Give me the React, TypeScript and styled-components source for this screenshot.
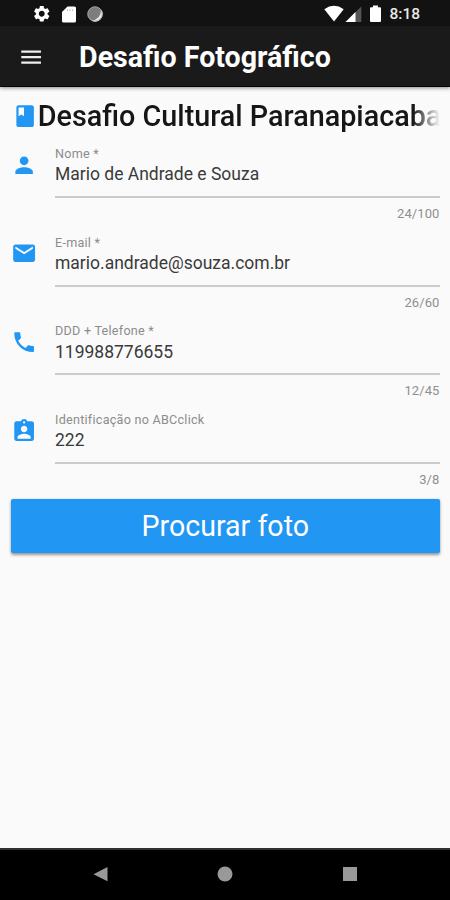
import React from "react";
import styled, { createGlobalStyle } from "styled-components";

const GlobalStyle = createGlobalStyle`
  *, *::before, *::after { box-sizing: border-box; }
  body {
    margin: 0;
    background: #fafafa;
    font-family: Roboto, "Liberation Sans", sans-serif;
  }
`;

const Screen = styled.div`
  display: flex;
  flex-direction: column;
  width: 450px;
  height: 900px;
  overflow: hidden;
  background: #fafafa;
`;

const StatusBar = styled.div`
  display: flex;
  flex: none;
  align-items: center;
  justify-content: space-between;
  height: 26px;
  padding: 2px 30px 0 32px;
  background: #121212;
`;

const StatusGroup = styled.div<{ $gap: number }>`
  display: flex;
  align-items: center;
  gap: ${(p) => p.$gap}px;
`;

const Clock = styled.span`
  color: #e8e8e8;
  font-size: 15.5px;
  font-weight: 500;
  line-height: 18px;
`;

const AppBar = styled.header`
  display: flex;
  flex: none;
  align-items: center;
  height: 61px;
  padding-left: 17.8px;
  background: #1a1a1a;
  border-bottom: 1px solid #060606;
  box-shadow: 0 1px 4px rgba(0, 0, 0, 0.45);
`;

const MenuButton = styled.button`
  display: flex;
  padding: 2px 0 0;
  border: 0;
  background: none;
`;

const AppTitle = styled.h1`
  margin: 1px 0 0 35px;
  color: #fff;
  font-size: 28.6px;
  font-weight: 700;
  line-height: 34px;
  white-space: nowrap;
`;

const Content = styled.main`
  display: flex;
  flex: 1;
  flex-direction: column;
  padding: 11px 10.5px 0 11px;
`;

const Heading = styled.div`
  display: flex;
  align-items: center;
  height: 36px;
  padding-left: 0.6px;
`;

const HeadingText = styled.h2`
  flex: 1;
  min-width: 0;
  margin: 0;
  overflow: hidden;
  color: #161616;
  font-size: 28.75px;
  font-weight: 500;
  line-height: 36px;
  white-space: nowrap;
  mask-image: linear-gradient(to right, #000 calc(100% - 27px), transparent);
`;

const Form = styled.form`
  display: flex;
  flex-direction: column;
  padding-top: 5px;
`;

const Field = styled.div`
  display: flex;
  height: 88.6px;
`;

const FieldIcon = styled.div`
  flex: none;
  width: 44px;
  padding: 12.9px 0 0 0.4px;
`;

const FieldBody = styled.label`
  display: flex;
  flex: 1;
  flex-direction: column;
  min-width: 0;
  padding-top: 7px;
`;

const FieldLabel = styled.span<{ $tracking: number }>`
  color: #8c8c8c;
  font-size: 12.6px;
  line-height: 16px;
  letter-spacing: ${(p) => p.$tracking}px;
`;

const FieldValue = styled.span`
  height: 36px;
  padding-top: 1.4px;
  border-bottom: 2px solid #cbcbcb;
  color: #3a3a3a;
  font-size: 17.5px;
  line-height: 23px;
`;

const Counter = styled.span`
  align-self: flex-end;
  margin-top: 8px;
  color: #8f8f8f;
  font-size: 13px;
  line-height: 16px;
  letter-spacing: 0.1px;
`;

const PhotoButton = styled.button`
  height: 54px;
  margin-top: 5.2px;
  padding: 0;
  border: 0;
  border-radius: 2px;
  background: #2196f3;
  box-shadow: 0 1.5px 3px rgba(0, 0, 0, 0.4);
  color: #fff;
  font-family: inherit;
  font-size: 28.6px;
  line-height: 34px;
`;

const NavBar = styled.nav`
  display: flex;
  flex: none;
  align-items: center;
  justify-content: space-between;
  height: 52px;
  padding: 0 92px 2px;
  border-top: 2px solid #303030;
  background: #000;
`;

const Icon = ({ d, size = 26.25, color = "#2196f3" }: { d: string; size?: number; color?: string }) => (
  <svg width={size} height={size} viewBox="0 0 24 24" fill={color} display="block">
    <path d={d} />
  </svg>
);

const icons = {
  book: "M18 2H6c-1.1 0-2 .9-2 2v16c0 1.1.9 2 2 2h12c1.1 0 2-.9 2-2V4c0-1.1-.9-2-2-2zM6 4h5v8l-2.5-1.5L6 12V4z",
  person: "M12 12c2.21 0 4-1.79 4-4s-1.79-4-4-4-4 1.79-4 4 1.79 4 4 4zm0 2c-2.67 0-8 1.34-8 4v2h16v-2c0-2.66-5.33-4-8-4z",
  email: "M20 4H4c-1.1 0-1.99.9-1.99 2L2 18c0 1.1.9 2 2 2h16c1.1 0 2-.9 2-2V6c0-1.1-.9-2-2-2zm0 4l-8 5-8-5V6l8 5 8-5v2z",
  phone: "M6.62 10.79c1.44 2.83 3.76 5.14 6.59 6.59l2.2-2.2c.27-.27.67-.36 1.02-.24 1.12.37 2.33.57 3.57.57.55 0 1 .45 1 1V20c0 .55-.45 1-1 1-9.39 0-17-7.61-17-17 0-.55.45-1 1-1h3.5c.55 0 1 .45 1 1 0 1.25.2 2.45.57 3.57.11.35.03.74-.25 1.02l-2.2 2.2z",
  badge: "M19 3h-4.18C14.4 1.84 13.3 1 12 1s-2.4.84-2.82 2H5c-1.1 0-2 .9-2 2v14c0 1.1.9 2 2 2h14c1.1 0 2-.9 2-2V5c0-1.1-.9-2-2-2zm-7 0c.55 0 1 .45 1 1s-.45 1-1 1-1-.45-1-1 .45-1 1-1zm0 4c1.66 0 3 1.34 3 3s-1.34 3-3 3-3-1.34-3-3 1.34-3 3-3zm6 12H6v-1.4c0-2 4-3.1 6-3.1s6 1.1 6 3.1V19z",
  menu: "M3 18h18v-2H3v2zm0-5h18v-2H3v2zm0-7v2h18V6H3z",
  gear: "M19.14 12.94c.04-.3.06-.61.06-.94 0-.32-.02-.64-.07-.94l2.03-1.58c.18-.14.23-.41.12-.61l-1.92-3.32c-.12-.22-.37-.29-.59-.22l-2.39.96c-.5-.38-1.03-.7-1.62-.94L14.4 2.81c-.04-.24-.24-.41-.48-.41h-3.84c-.24 0-.43.17-.47.41L9.25 5.35c-.59.24-1.13.57-1.62.94L5.24 5.33c-.22-.08-.47 0-.59.22L2.74 8.87c-.12.21-.08.47.12.61l2.03 1.58c-.05.3-.09.63-.09.94s.02.64.07.94l-2.03 1.58c-.18.14-.23.41-.12.61l1.92 3.32c.12.22.37.29.59.22l2.39-.96c.5.38 1.03.7 1.62.94l.36 2.54c.05.24.24.41.48.41h3.84c.24 0 .44-.17.47-.41l.36-2.54c.59-.24 1.13-.56 1.62-.94l2.39.96c.22.08.47 0 .59-.22l1.92-3.32c.12-.22.07-.47-.12-.61l-2.01-1.58zM12 15.6c-1.98 0-3.6-1.62-3.6-3.6s1.62-3.6 3.6-3.6 3.6 1.62 3.6 3.6-1.62 3.6-3.6 3.6z",
};

const fields = [
  { icon: icons.person, label: "Nome *", value: "Mario de Andrade e Souza", count: "24/100", tracking: 0.25 },
  { icon: icons.email, label: "E-mail *", value: "mario.andrade@souza.com.br", count: "26/60", tracking: 0.25 },
  { icon: icons.phone, label: "DDD + Telefone *", value: "119988776655", count: "12/45", tracking: 0.25 },
  { icon: icons.badge, label: "Identificação no ABCclick", value: "222", count: "3/8", tracking: 0.25 },
];

export default function App() {
  return (
    <>
      <GlobalStyle />
      <Screen>
        <StatusBar>
          <StatusGroup $gap={10}>
            <Icon d={icons.gear} size={19.5} color="#fff" />
            <svg width="14" height="17" viewBox="0 0 14 17">
              <path d="M5.5 0.5H12.5Q14 .5 14 2V15Q14 16.5 12.5 16.5H1.5Q0 16.5 0 15V6Z" fill="#fff" />
              <path d="M5.5 3.4v1.6M8 3.4v1.6M10.5 3.4v1.6" stroke="#bbb" strokeWidth="1" />
            </svg>
            <svg width="18" height="18" viewBox="0 0 18 18">
              <circle cx="9" cy="9" r="7.6" fill="#7d7d7d" />
              <path d="M14.9 4.2A7.6 7.6 0 0 1 5.2 15.6Q15.5 14.5 14.9 4.2Z" fill="#e6e6e6" />
              <circle cx="9" cy="9" r="7.2" fill="none" stroke="#aaa" strokeWidth=".8" />
            </svg>
          </StatusGroup>
          <StatusGroup $gap={8}>
            <svg width="38" height="18" viewBox="0 0 38 18">
              <path d="M.3 4.3Q10 -2.6 19.7 4.3L10 16.5Z" fill="#fff" />
              <path d="M37.3 1.5V17H21.5Z" fill="#555" />
              <path d="M31.5 7V17H21.5Z" fill="#fff" />
            </svg>
            <svg width="11" height="18" viewBox="0 0 11 18">
              <path d="M3 .5h5v1.8h2q1 0 1 1V16q0 1-1 1H1q-1 0-1-1V3.3q0-1 1-1h2Z" fill="#fff" />
            </svg>
            <Clock>8:18</Clock>
          </StatusGroup>
        </StatusBar>
        <AppBar>
          <MenuButton aria-label="Menu">
            <Icon d={icons.menu} color="#eee" />
          </MenuButton>
          <AppTitle>Desafio Fotográfico</AppTitle>
        </AppBar>
        <Content>
          <Heading>
            <Icon d={icons.book} />
            <HeadingText>Desafio Cultural Paranapiacaba</HeadingText>
          </Heading>
          <Form>
            {fields.map((f) => (
              <Field key={f.label}>
                <FieldIcon>
                  <Icon d={f.icon} />
                </FieldIcon>
                <FieldBody>
                  <FieldLabel $tracking={f.tracking}>{f.label}</FieldLabel>
                  <FieldValue>{f.value}</FieldValue>
                  <Counter>{f.count}</Counter>
                </FieldBody>
              </Field>
            ))}
            <PhotoButton type="button">Procurar foto</PhotoButton>
          </Form>
        </Content>
        <NavBar>
          <svg width="16" height="16" viewBox="0 0 16 16">
            <path d="M15.5 1V15.3L1.5 8.2Z" fill="#999" />
          </svg>
          <svg width="16" height="16" viewBox="0 0 16 16">
            <circle cx="8" cy="8" r="7.5" fill="#999" />
          </svg>
          <svg width="16" height="16" viewBox="0 0 16 16">
            <rect x="1" y="1" width="14" height="14" fill="#999" />
          </svg>
        </NavBar>
      </Screen>
    </>
  );
}
